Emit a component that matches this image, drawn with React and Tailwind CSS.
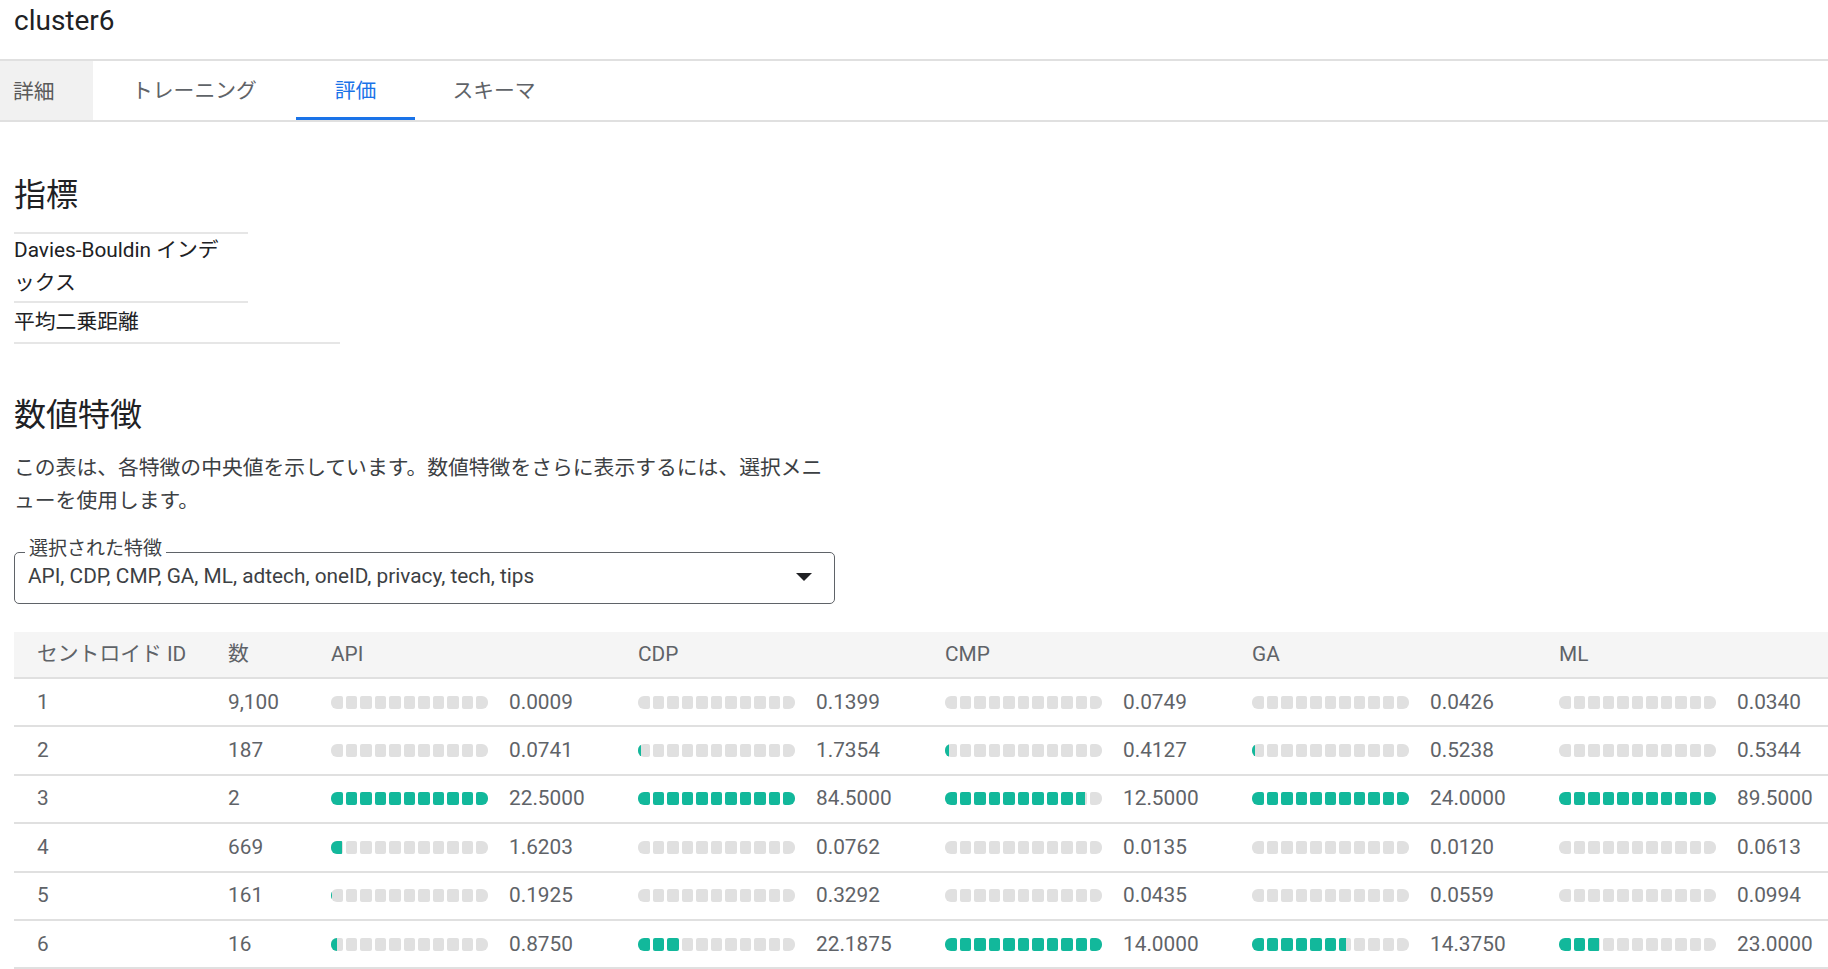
import React from "react";
import clsx from "clsx";

const features = ["API", "CDP", "CMP", "GA", "ML"];

const rows = [
  { id: "1", count: "9,100", vals: ["0.0009", "0.1399", "0.0749", "0.0426", "0.0340"] },
  { id: "2", count: "187", vals: ["0.0741", "1.7354", "0.4127", "0.5238", "0.5344"] },
  { id: "3", count: "2", vals: ["22.5000", "84.5000", "12.5000", "24.0000", "89.5000"] },
  { id: "4", count: "669", vals: ["1.6203", "0.0762", "0.0135", "0.0120", "0.0613"] },
  { id: "5", count: "161", vals: ["0.1925", "0.3292", "0.0435", "0.0559", "0.0994"] },
  { id: "6", count: "16", vals: ["0.8750", "22.1875", "14.0000", "14.3750", "23.0000"] },
];

// max per column, bars are scaled against it
const maxes = features.map((_, c) => Math.max(...rows.map((r) => parseFloat(r.vals[c]))));

const BAR_W = 157;
const GAP = 3;
const SEG = (BAR_W - GAP * 10) / 11;

function Bar({ value, max }) {
  const px = Math.floor((value / max) * BAR_W);
  return (
    <div className="flex gap-[3px] w-[157px] h-[13px] shrink-0">
      {Array.from({ length: 11 }).map((_, i) => {
        const start = i * (SEG + GAP);
        const f = Math.max(0, Math.min(1, (px - start) / SEG));
        return (
          <div
            key={i}
            className={clsx(
              "flex-1 overflow-hidden bg-[#e0e0e0]",
              i === 0 ? "rounded-l-[6px] rounded-r-[2px]" : i === 10 ? "rounded-r-[6px] rounded-l-[2px]" : "rounded-[2px]"
            )}
          >
            <div className="h-full bg-[#12b89b]" style={{ width: `${f * 100}%` }} />
          </div>
        );
      })}
    </div>
  );
}

function Tabs() {
  return (
    <div className="flex border-y-2 border-[#e0e0e0] text-[20.8px] text-[#5f6368]">
      <div className="h-[59px] w-[93px] pl-[13px] pt-[5px] flex items-center bg-[#f1f1f1] text-[#5a5a5a]">詳細</div>
      <div className="h-[59px] px-[39px] flex items-center border-b-[3px] border-transparent pt-[6px]">トレーニング</div>
      <div className="h-[59px] px-[39px] flex items-center border-b-[3px] border-[#1a73e8] text-[#1a73e8] pt-[6px]">評価</div>
      <div className="h-[59px] px-[37px] flex items-center border-b-[3px] border-transparent pt-[6px]">スキーマ</div>
    </div>
  );
}

export default function App() {
  return (
    <div
      lang="ja"
      className="w-full h-[969px] overflow-hidden bg-white font-[Roboto,'Noto_Sans_CJK_JP',sans-serif] text-[#202124]"
    >
      <div className="h-[59px] px-[14px] pt-[3px] text-[28px] leading-[36px]">cluster6</div>
      <Tabs />

      <div className="px-[14px]">
        <h2 className="mt-[53px] text-[32px] leading-[40px]">指標</h2>

        {/* metrics table */}
        <div className="mt-[17px] text-[20.8px] leading-[33px] text-[#202124]">
          <div className="flex">
            <div className="w-[234px] pr-[16px] pb-[1px] border-y-2 border-[#e6e6e6]">Davies-Bouldin インデックス</div>
          </div>
          <div className="flex">
            <div className="w-[234px] pt-[3px] pb-[3px] border-b-2 border-[#e6e6e6]">平均二乗距離</div>
            <div className="w-[92px] border-b-2 border-[#e6e6e6]"></div>
          </div>
        </div>

        <h2 className="mt-[51px] text-[32px] leading-[40px]">数値特徴</h2>
        <p className="mt-[17px] w-[821px] text-[20.8px] leading-[33px] text-[#3c4043]">
          この表は、各特徴の中央値を示しています。数値特徴をさらに表示するには、選択メニューを使用します。
        </p>

        {/* select */}
        <div className="relative mt-[34px] w-[821px] h-[52px] rounded-[5px] border-[1.5px] border-[#5f6368] flex items-center pl-[13px] pr-[22px] pb-[3px]">
          <span className="absolute -top-[16px] left-[10px] px-[4px] bg-white text-[19px] leading-[24px] text-[#3c4043]">
            選択された特徴
          </span>
          <span className="flex-1 text-[20.8px] text-[#3c4043]">
            API, CDP, CMP, GA, ML, adtech, oneID, privacy, tech, tips
          </span>
          <svg width="16" height="8" viewBox="0 0 16 8" className="mt-[1px]">
            <path d="M0 0 L16 0 L8 8 Z" fill="#202124" />
          </svg>
        </div>

        {/* numeric features table */}
        <div className="mt-[28px] min-w-max text-[20.8px] text-[#5f6368]">
          <div className="flex h-[47px] bg-[#f5f5f5] border-b-2 border-[#e0e0e0] items-center">
            <div className="w-[191px] pl-[23px] shrink-0">セントロイド ID</div>
            <div className="w-[103px] pl-[23px] shrink-0">数</div>
            {features.map((f) => (
              <div key={f} className="w-[307px] pl-[23px] shrink-0">
                {f}
              </div>
            ))}
          </div>
          {rows.map((r) => (
            <div key={r.id} className="flex h-[48.4px] border-b-2 border-[#e0e0e0] items-center">
              <div className="w-[191px] pl-[23px] shrink-0">{r.id}</div>
              <div className="w-[103px] pl-[23px] shrink-0">{r.count}</div>
              {r.vals.map((v, c) => (
                <div key={c} className="w-[307px] pl-[23px] shrink-0 flex items-center">
                  <Bar value={parseFloat(v)} max={maxes[c]} />
                  <span className="ml-[21px]">{v}</span>
                </div>
              ))}
            </div>
          ))}
        </div>
      </div>
    </div>
  );
}
